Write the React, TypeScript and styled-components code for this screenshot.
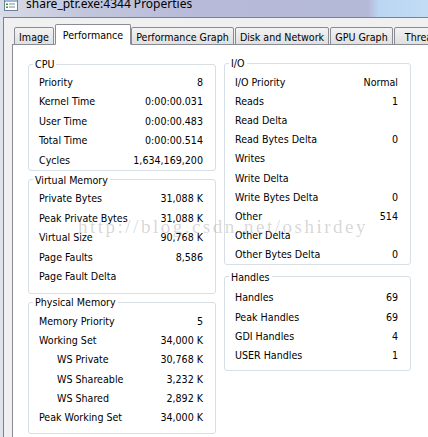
import React from 'react'
import styled, { createGlobalStyle } from 'styled-components'

const GlobalStyle = createGlobalStyle`
  html, body { margin: 0; padding: 0; background: #fff; }
  body {
    font-family: "DejaVu Sans Condensed", "DejaVu Sans", sans-serif;
    font-stretch: condensed;
    color: #000;
  }
`

const Window = styled.div`
  position: relative;
  width: 428px;
  height: 437px;
  overflow: hidden;
  display: flex;
  flex-direction: column;
`

const TitleBar = styled.div`
  height: 17px;
  flex: none;
  display: flex;
  align-items: flex-start;
  gap: 8px;
  padding-left: 4px;
  background: linear-gradient(to right, #d8dce6 0%, #c2c6dc 20%, #b7bbd9 45%, #b5b9d8 86%, #bbd6f2 88.5%, #c2dcf5 100%);
`

const TitleText = styled.span`
  font-family: "Noto Sans", "Liberation Sans", sans-serif;
  font-stretch: normal;
  font-size: 12px;
  line-height: 12px;
  margin-top: -2px;
  color: #000;
`

const Body = styled.div`
  flex: 1;
  display: flex;
  padding-left: 3px;
  background: #dfe4ec;
  min-height: 0;
`

const Client = styled.div`
  flex: 1;
  min-width: 0;
  display: flex;
  flex-direction: column;
  padding: 6px 0 0 8px;
  background: #f0f0f0;
  border-top: 1px solid #7c828c;
  border-left: 1px solid #7c828c;
`

const TabStrip = styled.div`
  display: flex;
  align-items: flex-end;
  padding-left: 2px;
  margin-bottom: -1px;
  position: relative;
  z-index: 1;
  white-space: nowrap;
`

const Tab = styled.div<{ $active?: boolean; $w: number }>`
  flex: none;
  box-sizing: border-box;
  width: ${p => p.$w}px;
  height: ${p => (p.$active ? 21 : 18)}px;
  margin-right: ${p => (p.$active ? 0 : 1)}px;
  display: flex;
  align-items: center;
  justify-content: center;
  padding-top: ${p => (p.$active ? 0 : 1)}px;
  font-size: 10.6px;
  border: 1px solid #898c95;
  border-bottom-color: ${p => (p.$active ? '#fff' : '#898c95')};
  border-radius: 2px 2px 0 0;
  background: ${p => (p.$active ? '#fff' : 'linear-gradient(#f3f3f3, #e9e9e9 50%, #e0e0e0)')};
  overflow: hidden;
`

const Panel = styled.div`
  flex: 1;
  display: flex;
  align-items: flex-start;
  gap: 8px;
  padding: 11px 0 0 15px;
  background: #fff;
  border-top: 1px solid #898c95;
  border-left: 1px solid #898c95;
`

const Column = styled.div<{ $w: number; $pt: number }>`
  width: ${p => p.$w}px;
  flex: none;
  display: flex;
  flex-direction: column;
  padding-top: ${p => p.$pt}px;
`

const Group = styled.fieldset<{ $mt: number; $pt: number; $pb: number }>`
  box-sizing: border-box;
  width: 100%;
  min-width: 0;
  margin: ${p => p.$mt}px 0 0;
  padding: ${p => p.$pt}px 12px ${p => p.$pb}px 10px;
  border: 1px solid #d5dfe5;
  border-radius: 3px;
`

const Legend = styled.legend`
  margin-left: -6px;
  padding: 0 2px;
  font-size: 10.6px;
  line-height: 14px;
`

const Row = styled.div<{ $h: number }>`
  height: ${p => p.$h}px;
  display: flex;
  align-items: center;
  justify-content: space-between;
  font-size: 10.6px;
`

const Label = styled.span<{ $indent?: boolean }>`
  padding-left: ${p => (p.$indent ? 18 : 0)}px;
`

const Value = styled.span`
  text-align: right;
`

const Watermark = styled.div`
  position: absolute;
  left: 78px;
  top: 216px;
  font-family: "Liberation Serif", serif;
  font-size: 19px;
  letter-spacing: 2.5px;
  line-height: 22px;
  color: rgba(150, 150, 150, 0.38);
  pointer-events: none;
  white-space: nowrap;
`

type Item = [string, string, boolean?]

type GroupDef = {
  title: string
  mt: number
  pt: number
  pb: number
  h: number
  rows: Item[]
}

const leftGroups: GroupDef[] = [
  {
    title: 'CPU', mt: 0, pt: 1, pb: 0, h: 19.5,
    rows: [
      ['Priority', '8'],
      ['Kernel Time', '0:00:00.031'],
      ['User Time', '0:00:00.483'],
      ['Total Time', '0:00:00.514'],
      ['Cycles', '1,634,169,200'],
    ],
  },
  {
    title: 'Virtual Memory', mt: 2, pt: 2, pb: 7, h: 19.5,
    rows: [
      ['Private Bytes', '31,088 K'],
      ['Peak Private Bytes', '31,088 K'],
      ['Virtual Size', '90,768 K'],
      ['Page Faults', '8,586'],
      ['Page Fault Delta', ''],
    ],
  },
  {
    title: 'Physical Memory', mt: 1, pt: 2, pb: 6, h: 19.3,
    rows: [
      ['Memory Priority', '5'],
      ['Working Set', '34,000 K'],
      ['WS Private', '30,768 K', true],
      ['WS Shareable', '3,232 K', true],
      ['WS Shared', '2,892 K', true],
      ['Peak Working Set', '34,000 K'],
    ],
  },
]

const rightGroups: GroupDef[] = [
  {
    title: 'I/O', mt: 0, pt: 2, pb: 0, h: 19.2,
    rows: [
      ['I/O Priority', 'Normal'],
      ['Reads', '1'],
      ['Read Delta', ''],
      ['Read Bytes Delta', '0'],
      ['Writes', ''],
      ['Write Delta', ''],
      ['Write Bytes Delta', '0'],
      ['Other', '514'],
      ['Other Delta', ''],
      ['Other Bytes Delta', '0'],
    ],
  },
  {
    title: 'Handles', mt: 5, pt: 4, pb: 6, h: 19.1,
    rows: [
      ['Handles', '69'],
      ['Peak Handles', '69'],
      ['GDI Handles', '4'],
      ['USER Handles', '1'],
    ],
  },
]

const tabs: { name: string; w: number; active?: boolean }[] = [
  { name: 'Image', w: 40 },
  { name: 'Performance', w: 76, active: true },
  { name: 'Performance Graph', w: 103 },
  { name: 'Disk and Network', w: 94 },
  { name: 'GPU Graph', w: 63 },
  { name: 'Threads', w: 60 },
]

const AppIcon = () => (
  <svg width="14" height="12" viewBox="0 0 14 12" style={{ flex: 'none', marginTop: -1 }}>
    <rect x="0.5" y="0.5" width="13" height="11" fill="#fff" stroke="#6d7f99" />
    <rect x="1" y="1" width="12" height="2" fill="#9bb6d8" />
    <rect x="2" y="4.5" width="2" height="1.5" fill="#3a9a3a" />
    <rect x="2" y="7.5" width="2" height="1.5" fill="#3a9a3a" />
    <rect x="5" y="4.5" width="6" height="1" fill="#7a8aa0" />
    <rect x="5" y="7.5" width="6" height="1" fill="#7a8aa0" />
  </svg>
)

const GroupBox = ({ g }: { g: GroupDef }) => (
  <Group $mt={g.mt} $pt={g.pt} $pb={g.pb}>
    <Legend>{g.title}</Legend>
    {g.rows.map(([label, value, indent]) => (
      <Row key={label} $h={g.h}>
        <Label $indent={indent}>{label}</Label>
        <Value>{value}</Value>
      </Row>
    ))}
  </Group>
)

export default function App() {
  return (
    <Window>
      <GlobalStyle />
      <TitleBar>
        <AppIcon />
        <TitleText>share_ptr.exe:4344 Properties</TitleText>
      </TitleBar>
      <Body>
        <Client>
          <TabStrip>
            {tabs.map(t => (
              <Tab key={t.name} $w={t.w} $active={t.active}>{t.name}</Tab>
            ))}
          </TabStrip>
          <Panel>
            <Column $w={188} $pt={1}>
              {leftGroups.map(g => <GroupBox key={g.title} g={g} />)}
            </Column>
            <Column $w={187} $pt={0}>
              {rightGroups.map(g => <GroupBox key={g.title} g={g} />)}
            </Column>
          </Panel>
        </Client>
      </Body>
      <Watermark>http://blog.csdn.net/oshirdey</Watermark>
    </Window>
  )
}
